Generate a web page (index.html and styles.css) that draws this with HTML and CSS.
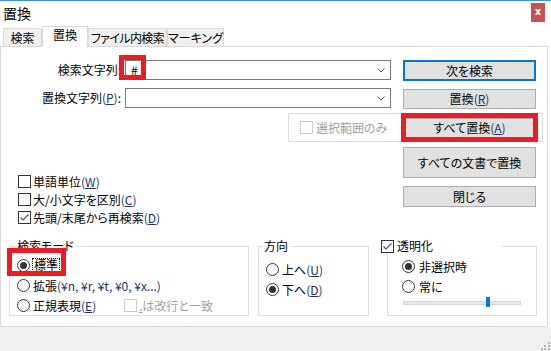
FILE: index.html
```html
<!DOCTYPE html>
<html lang="ja">
<head>
  <meta charset="UTF-8">
  <meta name="viewport" content="width=device-width, initial-scale=1.0">
  <title>置換</title>
  <link rel="stylesheet" href="styles.css">
</head>
<body>
  <div class="window">
    <div class="titlebar">
      <span class="title">置換</span>
      <span class="close">x</span>
    </div>

    <div class="tabs">
      <span class="tab tab-find">検索</span>
      <span class="tab tab-replace active">置換</span>
      <span class="tab tab-files">ファイル内検索</span>
      <span class="tab tab-mark">マーキング</span>
    </div>

    <div class="panel">
      <!-- search / replace fields -->
      <div class="field-row row-find">
        <span class="field-label">検索文字列:</span>
        <div class="combo">
          <span class="combo-text">#</span>
          <svg class="chevron" width="8" height="5" viewBox="0 0 8 5"><polyline points="0.5,0.5 4,4 7.5,0.5" fill="none" stroke="#555" stroke-width="1"/></svg>
          <span class="mark mark-find"></span>
        </div>
        <button class="btn btn-default">次を検索</button>
      </div>

      <div class="field-row row-replace">
        <span class="field-label">置換文字列<span class="acc">(<u>P</u>)</span>:</span>
        <div class="combo">
          <span class="combo-text"></span>
          <svg class="chevron" width="8" height="5" viewBox="0 0 8 5"><polyline points="0.5,0.5 4,4 7.5,0.5" fill="none" stroke="#555" stroke-width="1"/></svg>
        </div>
        <button class="btn btn-replace">置換<span class="acc">(<u>R</u>)</span></button>
      </div>

      <div class="scope">
        <span class="check disabled"></span>
        <span class="muted">選択範囲のみ</span>
        <span class="mark-wrap">
          <button class="btn btn-all">すべて置換<span class="acc">(<u>A</u>)</span></button>
          <span class="mark mark-all"></span>
        </span>
      </div>

      <div class="lower">
        <div class="options">
          <div class="option"><span class="check"></span>単語単位<span class="acc">(<u>W</u>)</span></div>
          <div class="option"><span class="check"></span>大/小文字を区別<span class="acc">(<u>C</u>)</span></div>
          <div class="option"><span class="check on"><svg width="11" height="11" viewBox="0 0 11 11"><polyline points="1.5,5.5 4,8 9.5,2.5" fill="none" stroke="#555" stroke-width="1.2"/></svg></span>先頭/末尾から再検索<span class="acc">(<u>D</u>)</span></div>
        </div>
        <div class="actions">
          <button class="btn btn-tall">すべての文書で置換</button>
          <button class="btn btn-close">閉じる</button>
        </div>
      </div>

      <!-- group boxes -->
      <div class="groups">
        <fieldset class="group group-mode">
          <legend class="legend-mode">検索モード</legend>
          <div class="choice choice-normal">
            <span class="radio on"></span>
            <span class="focus">標準</span>
            <span class="mark mark-normal"></span>
          </div>
          <div class="choice">
            <span class="radio"></span>拡張<span class="acc">(¥n, ¥r, ¥t, ¥0, ¥x...)</span>
          </div>
          <div class="choice">
            <span class="regex"><span class="radio"></span>正規表現<span class="acc">(<u>E</u>)</span></span>
            <span class="check disabled"></span><span class="muted"><u>.</u>は改行と一致</span>
          </div>
        </fieldset>

        <fieldset class="group group-dir">
          <legend class="legend-dir">方向</legend>
          <div class="choice"><span class="radio"></span>上へ<span class="acc">(<u>U</u>)</span></div>
          <div class="choice"><span class="radio on"></span>下へ<span class="acc">(<u>D</u>)</span></div>
        </fieldset>

        <fieldset class="group group-trans">
          <legend class="legend-trans"><span class="check on"><svg width="11" height="11" viewBox="0 0 11 11"><polyline points="1.5,5.5 4,8 9.5,2.5" fill="none" stroke="#555" stroke-width="1.2"/></svg></span>透明化</legend>
          <div class="choice"><span class="radio on"></span>非選択時</div>
          <div class="choice"><span class="radio"></span>常に</div>
          <div class="slider"><span class="thumb" style="left: 82px"></span></div>
        </fieldset>
      </div>
    </div>

    <div class="statusbar">
      <svg width="10" height="10" viewBox="0 0 10 10" fill="#b4b4b4">
        <rect x="8" y="2" width="2" height="2"/>
        <rect x="4" y="5" width="2" height="2"/><rect x="8" y="5" width="2" height="2"/>
        <rect x="1" y="8" width="2" height="2"/><rect x="4" y="8" width="2" height="2"/><rect x="8" y="8" width="2" height="2"/>
      </svg>
    </div>
  </div>
</body>
</html>
```

FILE: styles.css
```css
* {
  box-sizing: border-box;
}
body {
  margin: 0;
  width: 551px;
  height: 351px;
  overflow: hidden;
  background: #fff;
  font-family: "Noto Sans CJK JP", "Noto Sans", sans-serif;
  font-size: 12px;
  color: #000;
  white-space: nowrap;
  font-feature-settings: "palt";
}
.window {
  display: flex;
  flex-direction: column;
  height: 351px;
}

/* title bar */
.titlebar {
  height: 26px;
  border-top: 1px solid #3c8ee0;
  display: flex;
  align-items: flex-start;
}
.title {
  font-size: 14px;
  line-height: 24px;
  margin-left: 3px;
}
.close {
  margin-left: auto;
  margin-top: 2px;
  margin-right: 6px;
  width: 14px;
  height: 19px;
  background: #c75050;
  color: #fff;
  font: bold 10px/17px "DejaVu Sans", sans-serif;
  text-align: center;
}

/* tabs */
.tabs {
  height: 20px;
  display: flex;
  align-items: flex-end;
  padding-left: 3px;
  position: relative;
  z-index: 1;
}
.tab {
  height: 18px;
  border: 1px solid #d9d9d9;
  border-bottom: none;
  background: #f0f0f0;
  text-align: center;
  line-height: 17px;
}
.tab.active {
  height: 21px;
  margin-bottom: -1px;
  background: #fff;
  line-height: 15px;
}
.tab-find { width: 39px; }
.tab-replace { width: 46px; }
.tab-files {
  width: 79px;
  letter-spacing: -0.6px;
}
.tab-mark { width: 57px; }

.panel {
  width: 548px;
  height: 281px;
  border: 1px solid #d9d9d9;
}

/* fields */
.field-row {
  display: flex;
  align-items: flex-start;
  height: 21px;
}
.row-find { margin-top: 13px; }
.row-replace { margin-top: 7px; }
.field-label {
  width: 120px;
  text-align: right;
  line-height: 20px;
}
.combo {
  position: relative;
  width: 266px;
  height: 20px;
  margin-left: 4px;
  border: 1px solid #7a7a7a;
  display: flex;
  align-items: center;
  padding: 0 5px;
}
.combo-text {
  flex: 1;
  line-height: 18px;
}
.acc {
  color: #1d2f6a;
}

.btn {
  display: block;
  width: 133px;
  height: 21px;
  padding: 0;
  background: #e1e1e1;
  border: 1px solid #adadad;
  font-family: inherit;
  font-size: 12px;
  color: #000;
  line-height: 16px;
  font-feature-settings: "palt";
}
.btn-default {
  margin-left: 12px;
  border: 2px solid #0078d7;
}
.btn-replace {
  margin-left: 12px;
  margin-top: 1px;
  height: 20px;
}
.btn-all { height: 20px; }
.btn-tall { height: 31px; }

/* red annotation boxes */
.mark {
  position: absolute;
  border: 5px solid #ec1c24;
  pointer-events: none;
}
.mark-find {
  left: -7px;
  top: -6px;
  width: 27px;
  height: 25px;
}
.mark-wrap {
  position: relative;
  margin-left: auto;
  align-self: flex-start;
  margin-top: 4px;
}
.mark-all {
  left: -2px;
  right: -2px;
  top: -5px;
  bottom: -4px;
}
.mark-normal {
  left: -3px;
  top: -7px;
  width: 59px;
  height: 28px;
}

/* selection scope */
.scope {
  margin-top: 4px;
  margin-left: 287px;
  width: 255px;
  height: 29px;
  border: 1px solid #dcdcdc;
  display: flex;
  align-items: center;
  padding: 0 6px 0 11px;
}
.muted {
  color: #a0a0a0;
}

/* check boxes and radios */
.check {
  width: 13px;
  height: 13px;
  border: 1px solid #333;
  background: #fff;
  flex: none;
  display: inline-flex;
  margin-right: 3px;
}
.check.disabled {
  border-color: #cccccc;
}
.radio {
  width: 13px;
  height: 13px;
  border: 1px solid #333;
  border-radius: 50%;
  background: #fff;
  flex: none;
  display: inline-flex;
  align-items: center;
  justify-content: center;
  margin-right: 3px;
}
.radio.on::after {
  content: "";
  width: 7px;
  height: 7px;
  border-radius: 50%;
  background: #333;
}

.lower {
  display: flex;
  height: 84px;
}
.options {
  width: 402px;
  padding: 30px 0 0 17px;
}
.option {
  display: flex;
  align-items: center;
  height: 18px;
}
.option .check {
  margin-right: 2px;
}
.actions {
  display: flex;
  flex-direction: column;
  gap: 8px;
  padding-top: 5px;
}

/* group boxes */
.groups {
  display: flex;
  align-items: flex-start;
  margin-top: 13px;
}
.group {
  margin: 0;
  padding: 0;
  min-width: 0;
  height: 77px;
  border: 1px solid #dcdcdc;
}
.group legend {
  line-height: 14px;
  padding: 0 2px;
}
.group-mode {
  margin-left: 8px;
  width: 240px;
  padding-top: 2px;
}
.legend-mode { margin-left: 5px; }
.group-dir {
  margin-left: 9px;
  width: 111px;
  padding-top: 6px;
}
.legend-dir { margin-left: 3px; }
.group-trans {
  margin-left: 18px;
  width: 150px;
  padding-top: 3px;
}
.legend-trans {
  margin-left: -7px;
  width: 121px;
  display: flex;
  align-items: center;
}
.group .legend-trans {
  padding: 0;
}

.choice {
  display: flex;
  align-items: center;
  height: 20px;
  padding-left: 7px;
  position: relative;
}
.group-trans .choice {
  padding-left: 14px;
}
.group-trans .radio {
  margin-right: 4px;
}
.choice-normal .radio {
  margin-right: 2px;
}
.focus {
  border: 1px dotted #000;
  line-height: 12px;
  padding: 0 1px;
}
.regex {
  display: flex;
  align-items: center;
  width: 107px;
}
.choice .check {
  margin-right: 2px;
}

.slider {
  position: relative;
  margin: 5px 0 0 15px;
  width: 118px;
  height: 4px;
  background: #e7eaea;
  border: 1px solid #d6d6d6;
}
.thumb {
  position: absolute;
  top: -5px;
  width: 4px;
  height: 10px;
  background: #0078d7;
}

.statusbar {
  flex: 1;
  background: #f0f0f0;
  display: flex;
  justify-content: flex-end;
  align-items: flex-end;
  padding: 0 1px 1px 0;
}
```
